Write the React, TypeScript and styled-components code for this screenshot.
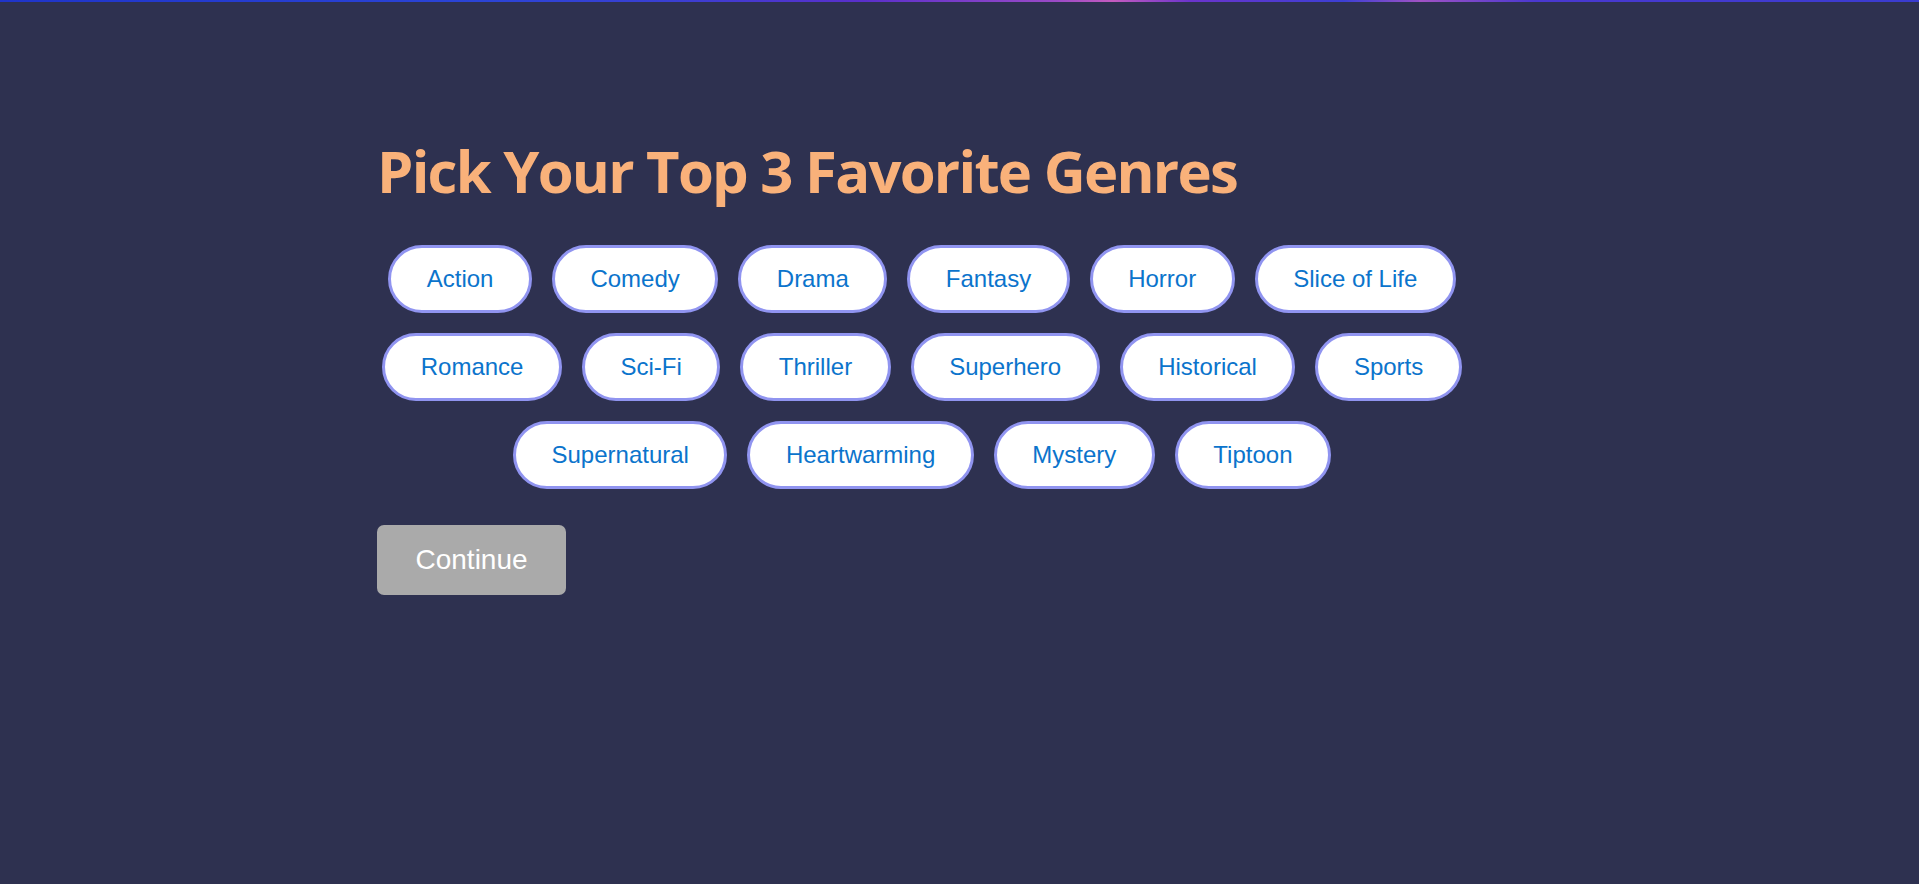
import React from "react";
import styled, { createGlobalStyle } from "styled-components";

const GlobalStyle = createGlobalStyle`
  html, body {
    margin: 0;
    padding: 0;
    background: #2e3150;
    min-height: 100%;
  }
  body {
    font-family: "Liberation Sans", Arial, sans-serif;
  }
`;

const Page = styled.div`
  min-height: 884px;
  background: #2e3150;
  display: flex;
  flex-direction: column;
`;

const TopLine = styled.div`
  height: 2px;
  background: linear-gradient(
    90deg,
    #1f34c9 0%,
    #2b44d6 25%,
    #3a3fd2 35%,
    #5a2fcb 45%,
    #9a4ac6 55%,
    #c45bbf 58%,
    #6b34cc 62%,
    #3c3fd4 70%,
    #a052c4 74%,
    #4a38d0 80%,
    #3a3cd0 100%
  );
`;

const Content = styled.main`
  width: 1100px;
  padding: 140px 0 0 372px;
  display: flex;
  flex-direction: column;
  align-items: flex-start;
`;

const Title = styled.h1`
  margin: 0 0 0 5px;
  font-family: "Open Sans", "Noto Sans", sans-serif;
  font-weight: 700;
  font-size: 58px;
  line-height: 1;
  color: #f9b17a;
  letter-spacing: -1.75px;
`;

const GenreList = styled.div`
  width: 100%;
  margin-top: 35px;
  display: flex;
  flex-wrap: wrap;
  justify-content: center;
`;

const GenreChip = styled.button<{ $selected?: boolean }>`
  margin: 10px;
  padding: 17px 35.5px;
  border: 3px solid #9094f0;
  border-radius: 999px;
  background: ${(p) => (p.$selected ? "#9094f0" : "#ffffff")};
  color: ${(p) => (p.$selected ? "#ffffff" : "#0b74cc")};
  font-family: "Liberation Sans", Arial, sans-serif;
  font-size: 24px;
  line-height: normal;
  cursor: pointer;
  white-space: nowrap;
`;

const ContinueButton = styled.button`
  margin: 26px 0 0 5px;
  padding: 19px 38.5px;
  border: none;
  border-radius: 7px;
  background: #aaaaaa;
  color: #ffffff;
  font-family: "Liberation Sans", Arial, sans-serif;
  font-size: 28px;
  line-height: normal;
  cursor: not-allowed;
`;

const genres = [
  "Action",
  "Comedy",
  "Drama",
  "Fantasy",
  "Horror",
  "Slice of Life",
  "Romance",
  "Sci-Fi",
  "Thriller",
  "Superhero",
  "Historical",
  "Sports",
  "Supernatural",
  "Heartwarming",
  "Mystery",
  "Tiptoon",
];

export default function App() {
  const [selected, setSelected] = React.useState<string[]>([]);
  const toggle = (g: string) =>
    setSelected((s) =>
      s.includes(g) ? s.filter((x) => x !== g) : s.length < 3 ? [...s, g] : s
    );
  return (
    <Page>
      <GlobalStyle />
      <TopLine />
      <Content>
        <Title>Pick Your Top 3 Favorite Genres</Title>
        <GenreList>
          {genres.map((g) => (
            <GenreChip
              key={g}
              $selected={selected.includes(g)}
              onClick={() => toggle(g)}
            >
              {g}
            </GenreChip>
          ))}
        </GenreList>
        <ContinueButton disabled={selected.length < 3}>Continue</ContinueButton>
      </Content>
    </Page>
  );
}
